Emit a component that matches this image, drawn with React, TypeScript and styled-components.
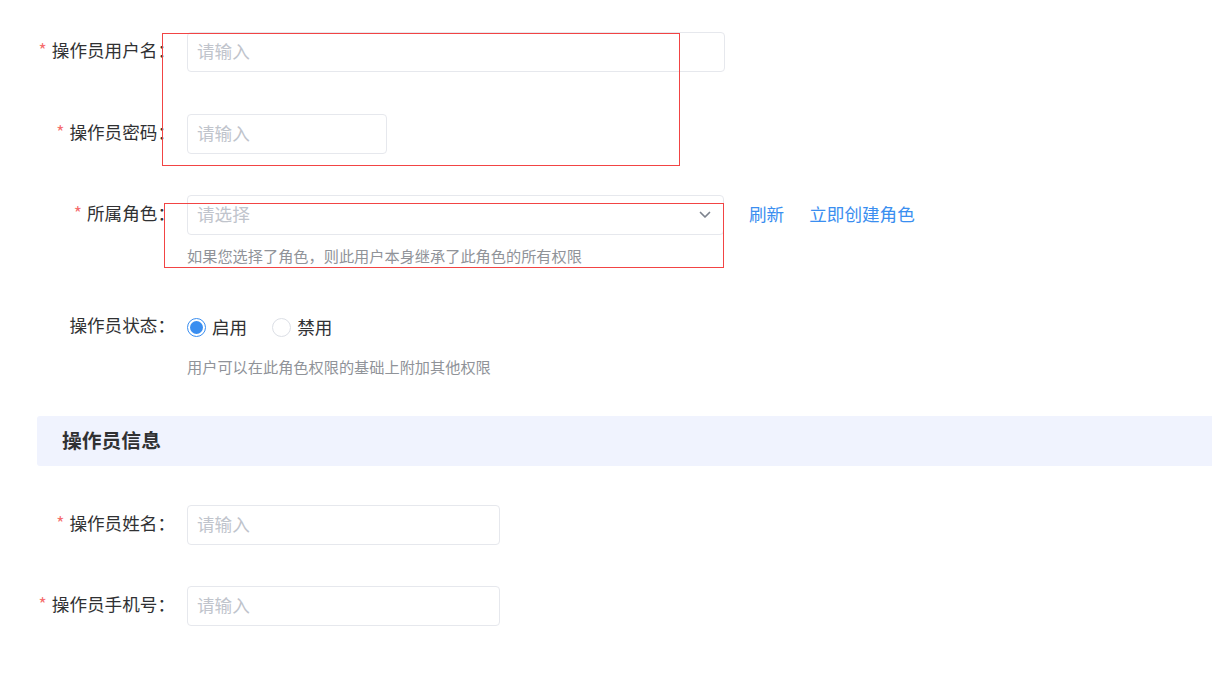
import React from "react";
import styled, { createGlobalStyle } from "styled-components";

const GlobalStyle = createGlobalStyle`
    html, body {
        margin: 0;
        padding: 0;
        background: #ffffff;
        font-family: "Noto Sans CJK SC", "Noto Sans", sans-serif;
        color: #303133;
    }
    * {
        box-sizing: border-box;
    }
`;

const Page = styled.div`
    position: relative;
    width: 1212px;
    min-height: 686px;
    padding: 32px 0 0 37px;
    overflow: hidden;
`;

const FormItem = styled.div<{ gap: number }>`
    display: flex;
    align-items: flex-start;
    margin-bottom: ${(p) => p.gap}px;
`;

const Label = styled.label<{ required?: boolean }>`
    width: 138px;
    flex-shrink: 0;
    margin-right: 12px;
    height: 40px;
    line-height: 36px;
    text-align: right;
    font-size: 17.6px;
    color: #303133;
    white-space: nowrap;

    &::before {
        content: ${(p) => (p.required ? "'*'" : "none")};
        color: #f56c6c;
        margin-right: 5px;
    }
`;

const Content = styled.div`
    display: flex;
    flex-direction: column;
`;

const Line = styled.div`
    display: flex;
    align-items: center;
    height: 40px;
`;

const Input = styled.input<{ w: number }>`
    width: ${(p) => p.w}px;
    height: 40px;
    border: 1px solid #e6e8ed;
    border-radius: 4px;
    padding: 0 11px 4px 9px;
    font-family: inherit;
    font-size: 17.6px;
    color: #303133;
    outline: none;

    &::placeholder {
        color: #c0c4cc;
    }
`;

const Select = styled.div`
    position: relative;
    width: 537px;
    height: 40px;
    border: 1px solid #e6e8ed;
    border-radius: 4px;
    padding: 0 11px 4px 9px;
    display: flex;
    align-items: center;
    justify-content: space-between;
    font-size: 17.6px;
    color: #c0c4cc;

    svg {
        margin-top: 4px;
    }
`;

const Link = styled.a`
    font-size: 17.6px;
    color: #3a8ef0;
    cursor: pointer;
    margin-left: 25px;
    margin-bottom: 4px;
`;

const Hint = styled.div<{ top: number }>`
    margin-top: ${(p) => p.top}px;
    font-size: 15.2px;
    line-height: 22px;
    color: #909399;
`;

const RadioGroup = styled.div`
    display: flex;
    align-items: center;
    height: 40px;
`;

const RadioItem = styled.label`
    display: flex;
    align-items: center;
    margin-right: 25px;
    font-size: 17.6px;
    line-height: 20px;
    color: #303133;
    cursor: pointer;
    padding-bottom: 1px;
`;

const RadioDot = styled.span<{ checked?: boolean }>`
    width: 19px;
    height: 19px;
    border-radius: 50%;
    border: 1px solid ${(p) => (p.checked ? "#3a8ef0" : "#dcdfe6")};
    margin: 1px 6px 0 0;
    display: flex;
    align-items: center;
    justify-content: center;
    background: #fff;

    &::after {
        content: "";
        width: 13px;
        height: 13px;
        border-radius: 50%;
        background: ${(p) => (p.checked ? "#3a8ef0" : "transparent")};
    }
`;

const SectionTitle = styled.div`
    height: 50px;
    margin: 0 -10px 39px 0;
    padding: 0 0 3px 25px;
    background: #f0f3fe;
    border-radius: 3px;
    display: flex;
    align-items: center;
    font-size: 19.8px;
    font-weight: 700;
    color: #303133;
`;

const Marker = styled.div<{ left: number; top: number; w: number; h: number }>`
    position: absolute;
    left: ${(p) => p.left}px;
    top: ${(p) => p.top}px;
    width: ${(p) => p.w}px;
    height: ${(p) => p.h}px;
    border: 1px solid #f24444;
    pointer-events: none;
`;

const Chevron = () => (
    <svg width="14" height="14" viewBox="0 0 14 14" fill="none">
        <path d="M2.5 4.5 L7 9 L11.5 4.5" stroke="#7d838e" strokeWidth="1.7" strokeLinecap="round" strokeLinejoin="round"/>
    </svg>
);

export default function App() {
    return (
        <>
            <GlobalStyle/>
            <Page>
                <FormItem gap={42}>
                    <Label required>操作员用户名：</Label>
                    <Content>
                        <Input w={538} placeholder="请输入"/>
                    </Content>
                </FormItem>
                <FormItem gap={41}>
                    <Label required>操作员密码：</Label>
                    <Content>
                        <Input w={200} placeholder="请输入" type="text"/>
                    </Content>
                </FormItem>
                <FormItem gap={41}>
                    <Label required>所属角色：</Label>
                    <Content>
                        <Line>
                            <Select>
                                <span>请选择</span>
                                <Chevron/>
                            </Select>
                            <Link>刷新</Link>
                            <Link>立即创建角色</Link>
                        </Line>
                        <Hint top={9}>如果您选择了角色，则此用户本身继承了此角色的所有权限</Hint>
                    </Content>
                </FormItem>
                <FormItem gap={39}>
                    <Label>操作员状态：</Label>
                    <Content>
                        <RadioGroup>
                            <RadioItem><RadioDot checked/>启用</RadioItem>
                            <RadioItem><RadioDot/>禁用</RadioItem>
                        </RadioGroup>
                        <Hint top={8}>用户可以在此角色权限的基础上附加其他权限</Hint>
                    </Content>
                </FormItem>
                <SectionTitle>操作员信息</SectionTitle>
                <FormItem gap={41}>
                    <Label required>操作员姓名：</Label>
                    <Content>
                        <Input w={313} placeholder="请输入"/>
                    </Content>
                </FormItem>
                <FormItem gap={41}>
                    <Label required>操作员手机号：</Label>
                    <Content>
                        <Input w={313} placeholder="请输入"/>
                    </Content>
                </FormItem>
                <Marker left={162} top={33} w={518} h={133}/>
                <Marker left={164} top={203} w={560} h={65}/>
            </Page>
        </>
    );
}
